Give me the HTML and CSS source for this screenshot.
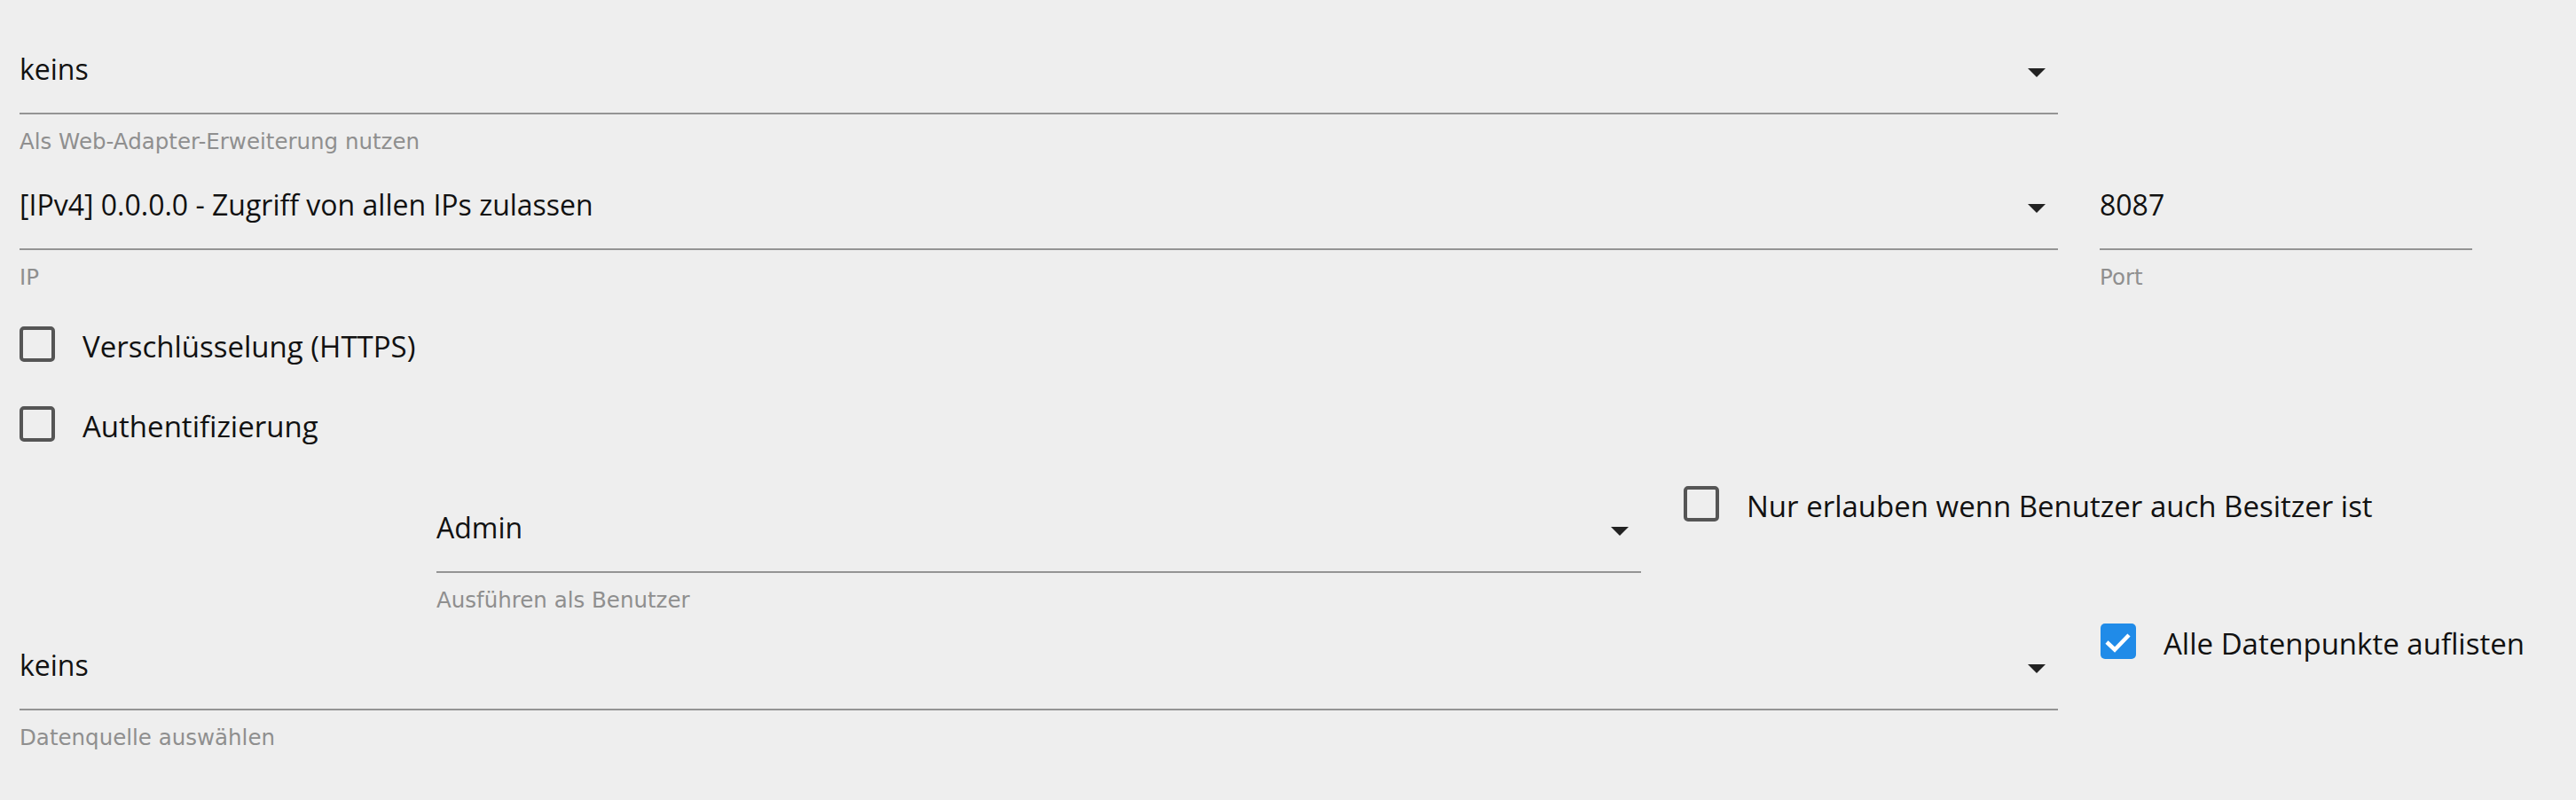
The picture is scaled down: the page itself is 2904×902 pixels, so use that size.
FILE: index.html
```html
<!DOCTYPE html>
<html lang="de">
<head>
    <meta charset="UTF-8">
    <title>Web-Adapter Einstellungen</title>
    <link rel="stylesheet" href="styles.css">
</head>
<body>
    <div class="form">
        <!-- Erweiterung -->
        <div class="row">
            <div class="field wide">
                <div class="select">
                    <span class="value">keins</span>
                    <svg class="arrow" viewBox="7 10 10 5"><path d="M7 10l5 5 5-5z"/></svg>
                </div>
                <div class="helper">Als Web-Adapter-Erweiterung nutzen</div>
            </div>
        </div>

        <!-- IP / Port -->
        <div class="row">
            <div class="field wide">
                <div class="select">
                    <span class="value">[IPv4] 0.0.0.0 - Zugriff von allen IPs zulassen</span>
                    <svg class="arrow" viewBox="7 10 10 5"><path d="M7 10l5 5 5-5z"/></svg>
                </div>
                <div class="helper">IP</div>
            </div>
            <div class="field port">
                <div class="select">
                    <span class="value">8087</span>
                </div>
                <div class="helper">Port</div>
            </div>
        </div>

        <!-- Checkboxes -->
        <div class="checks">
            <label class="check">
                <span class="box"></span>
                <span class="check-text">Verschlüsselung (HTTPS)</span>
            </label>
            <label class="check">
                <span class="box"></span>
                <span class="check-text">Authentifizierung</span>
            </label>
        </div>

        <!-- Benutzer -->
        <div class="row row-user">
            <div class="field user">
                <div class="select">
                    <span class="value">Admin</span>
                    <svg class="arrow" viewBox="7 10 10 5"><path d="M7 10l5 5 5-5z"/></svg>
                </div>
                <div class="helper">Ausführen als Benutzer</div>
            </div>
            <label class="check">
                <span class="box"></span>
                <span class="check-text">Nur erlauben wenn Benutzer auch Besitzer ist</span>
            </label>
        </div>

        <!-- Datenquelle -->
        <div class="row row-source">
            <div class="field wide">
                <div class="select">
                    <span class="value">keins</span>
                    <svg class="arrow" viewBox="7 10 10 5"><path d="M7 10l5 5 5-5z"/></svg>
                </div>
                <div class="helper">Datenquelle auswählen</div>
            </div>
            <label class="check">
                <span class="box checked">
                    <svg viewBox="0 0 40 40"><polyline points="7,21 16,29.5 32,13"/></svg>
                </span>
                <span class="check-text">Alle Datenpunkte auflisten</span>
            </label>
        </div>
    </div>
</body>
</html>
```

FILE: styles.css
```css
body {
    margin: 0;
    background-color: #eeeeee;
    font-family: "Open Sans", sans-serif;
    color: #111;
}

.form {
    padding: 18px 22px 40px;
}

.row {
    display: flex;
    align-items: flex-start;
}

.field {
    padding-top: 27px;
    flex-shrink: 0;
}

.field.wide {
    width: 2298px;
}

.field.port {
    width: 420px;
    margin-left: 47px;
}

.field.user {
    width: 1358px;
    margin-left: 470px;
}

.select {
    display: flex;
    align-items: flex-start;
    padding: 14px 0 30px;
    border-bottom: 2px solid #949494;
    font-size: 32px;
    line-height: 38px;
}

.select .value {
    flex: 1;
    white-space: nowrap;
}

.arrow {
    width: 20px;
    height: 10px;
    margin: 18px 14px 0 0;
    fill: #222;
}

.helper {
    margin-top: 19px;
    font-family: "DejaVu Sans", sans-serif;
    font-size: 24.5px;
    line-height: 23px;
    color: #8f8f8f;
    white-space: nowrap;
}

.checks {
    margin-top: 31px;
    display: flex;
    flex-direction: column;
    align-items: flex-start;
    gap: 24px;
}

.check {
    display: flex;
    align-items: center;
    gap: 31px;
    height: 66px;
    font-size: 33px;
    line-height: 38px;
    white-space: nowrap;
}

.check-text {
    padding-top: 5px;
}

.box {
    width: 40px;
    height: 40px;
    box-sizing: border-box;
    border: 4px solid #555;
    border-radius: 5px;
}

.box.checked {
    border: none;
    background-color: #208be8;
}

.box.checked svg {
    display: block;
    width: 40px;
    height: 40px;
    fill: none;
    stroke: #fff;
    stroke-width: 4.5;
}

.row-user {
    margin-top: 24px;
}

.row-source {
    margin-top: 2px;
}

.row-user .check,
.row-source .check {
    margin-left: 48px;
}
```
